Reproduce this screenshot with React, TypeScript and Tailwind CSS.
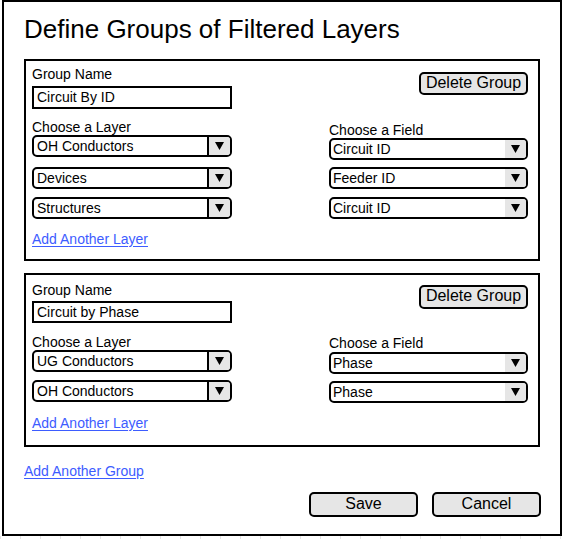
import React from "react";

const font = { fontFamily: '"Liberation Sans", Arial, sans-serif' };

function Arrow() {
  return (
    <svg width="9" height="8" viewBox="0 0 9 8">
      <polygon points="0,0 9,0 4.5,8" fill="#000" />
    </svg>
  );
}

function Select({ value, cls = "" }: { value: string; cls?: string }) {
  return (
    <div className={`flex h-[22px] w-[200px] rounded-[5px] border-2 border-black bg-white overflow-hidden ${cls}`}>
      <div className="flex-1 pl-[3px] text-[14px] leading-[18px] text-black whitespace-nowrap">{value}</div>
      <div className="flex w-[23px] items-center justify-center border-l-2 border-black bg-[#e6e6e6]">
        <Arrow />
      </div>
    </div>
  );
}

function FieldSelect({ value, cls = "" }: { value: string; cls?: string }) {
  return (
    <div className={`flex h-[22px] w-[199px] rounded-[5px] border-2 border-black bg-white overflow-hidden ${cls}`}>
      <div className="flex-1 pl-[2px] text-[14px] leading-[18px] text-black whitespace-nowrap">{value}</div>
      <div className="flex w-[21px] items-center justify-center bg-[#e6e6e6]">
        <Arrow />
      </div>
    </div>
  );
}

function Button({ label, cls = "" }: { label: string; cls?: string }) {
  return (
    <div
      className={`flex w-[109px] items-center justify-center rounded-[5px] border-2 border-black bg-[#e6e6e6] text-[16px] leading-[18px] text-black pb-[2px] ${cls}`}
    >
      {label}
    </div>
  );
}

function Link({ label, cls = "" }: { label: string; cls?: string }) {
  return (
    <div className={`text-[14px] leading-[16px] text-[#3d5cff] underline underline-offset-[2px] ${cls}`}>
      {label}
    </div>
  );
}

export default function App() {
  return (
    <div className="relative h-[539px] w-[565px] overflow-hidden bg-white" style={font}>
      <div className="ml-[2px] flex h-[536px] w-[560px] flex-col border-2 border-black pl-[20px]">
        <div className="mt-[12px] text-[26px] leading-[30px] text-black">Define Groups of Filtered Layers</div>

        {/* Group 1 */}
        <div className="mt-[15px] flex h-[202px] w-[516px] justify-between border-2 border-black pl-[6px] pr-[10px]">
          <div className="flex w-[200px] flex-col">
            <div className="mt-[5px] text-[14px] leading-[16px] text-black">Group Name</div>
            <div className="mt-[4px] h-[23px] w-[200px] border-2 border-black pl-[3px] text-[14px] leading-[19px] text-black">
              Circuit By ID
            </div>
            <div className="mt-[10px] text-[14px] leading-[16px] text-black">Choose a Layer</div>
            <Select value="OH Conductors" />
            <Select value="Devices" cls="mt-[10px]" />
            <Select value="Structures" cls="mt-[8px]" />
            <Link label="Add Another Layer" cls="mt-[12px]" />
          </div>
          <div className="flex w-[199px] flex-col items-end">
            <Button label="Delete Group" cls="mt-[11px] h-[23px]" />
            <div className="mt-[27px] w-full text-[14px] leading-[16px] text-black">Choose a Field</div>
            <FieldSelect value="Circuit ID" />
            <FieldSelect value="Feeder ID" cls="mt-[7px]" />
            <FieldSelect value="Circuit ID" cls="mt-[8px]" />
          </div>
        </div>

        {/* Group 2 */}
        <div className="mt-[12px] flex h-[174px] w-[516px] justify-between border-2 border-black pl-[6px] pr-[10px]">
          <div className="flex w-[200px] flex-col">
            <div className="mt-[7px] text-[14px] leading-[16px] text-black">Group Name</div>
            <div className="mt-[3px] h-[22px] w-[200px] border-2 border-black pl-[3px] text-[14px] leading-[18px] text-black">
              Circuit by Phase
            </div>
            <div className="mt-[11px] text-[14px] leading-[16px] text-black">Choose a Layer</div>
            <Select value="UG Conductors" />
            <Select value="OH Conductors" cls="mt-[8px]" />
            <Link label="Add Another Layer" cls="mt-[13px]" />
          </div>
          <div className="flex w-[199px] flex-col items-end">
            <Button label="Delete Group" cls="mt-[10px] h-[24px]" />
            <div className="mt-[26px] w-full text-[14px] leading-[16px] text-black">Choose a Field</div>
            <FieldSelect value="Phase" cls="mt-[1px]" />
            <FieldSelect value="Phase" cls="mt-[7px]" />
          </div>
        </div>

        <Link label="Add Another Group" cls="mt-[16px]" />

        <div className="mt-[13px] flex justify-end gap-[14px] pr-[19px]">
          <Button label="Save" cls="h-[25px]" />
          <Button label="Cancel" cls="h-[25px]" />
        </div>
      </div>
      <div className="h-[3px] w-full bg-[repeating-linear-gradient(to_right,#e4e4e4_0px,#e4e4e4_1px,transparent_1px,transparent_20px)]" />
    </div>
  );
}
